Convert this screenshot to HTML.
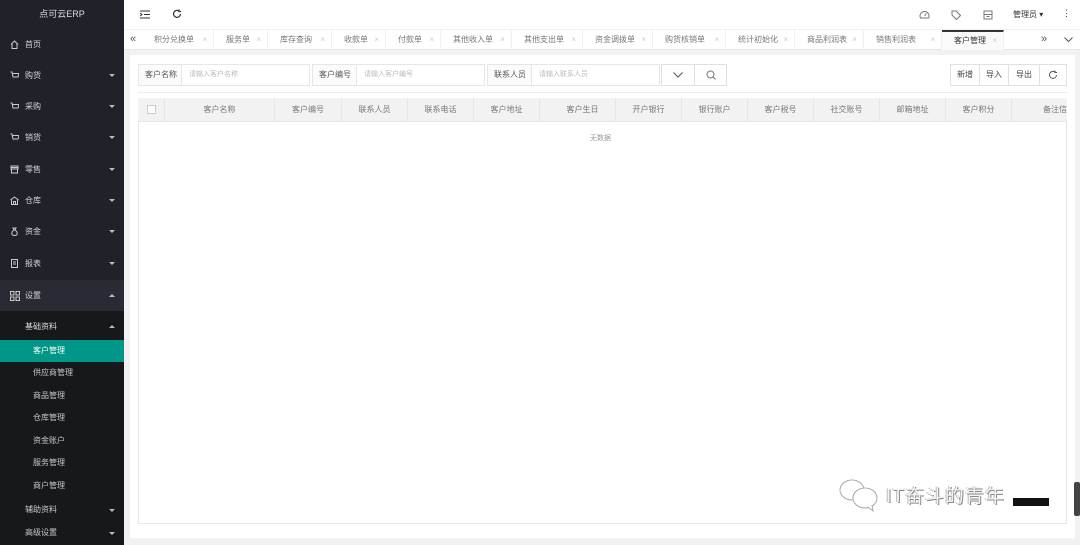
<!DOCTYPE html>
<html><head><meta charset="utf-8"><style>
*{margin:0;padding:0;box-sizing:border-box}
body{width:1080px;height:545px;overflow:hidden;font-family:"Liberation Sans","Noto Sans CJK SC",sans-serif;font-size:8px;color:#666;background:#f2f2f2;position:relative}
.side{position:absolute;left:0;top:0;width:124px;height:545px;background:#20222a;color:#ccc}
.logo{height:30px;line-height:28px;text-align:center;color:#ddd;font-size:9px}
.mi{position:absolute;left:0;width:124px;height:31px;line-height:31px;padding-left:10px;color:#d6d6d6;font-size:8px}
.mi svg{position:absolute;left:10px;top:11px}
.mi span.t{margin-left:15px}
.arr{position:absolute;right:9px;top:14px;width:0;height:0;border-left:3px solid transparent;border-right:3px solid transparent;border-top:3px solid #bbb}
.up{border-top:0;border-bottom:3px solid #bbb}
.sub{position:absolute;left:0;width:124px;height:22px;line-height:22px;padding-left:33px;color:#c8c8c8;font-size:8px}
.top{position:absolute;left:124px;top:0;right:0;height:30px;background:#fff;border-bottom:1px solid #f0f0f0}
.tabs{position:absolute;left:124px;top:30px;right:0;height:20px;background:#fff;border-bottom:1px solid #e6e6e6}
.tab{position:absolute;top:0;height:20px;line-height:20px;font-size:8px;color:#777;border-right:1px solid #f0f0f0;padding-left:12px}
.tab b{font-weight:normal;color:#ccc;position:absolute;right:6px}
.card{position:absolute;left:130px;top:55px;width:945px;height:483px;background:#fff}
.lbl{position:absolute;top:64px;height:22px;line-height:20px;border:1px solid #e6e6e6;font-size:8px;color:#555;background:#fbfbfb;padding-left:6px}
.inp{position:absolute;top:64px;height:22px;line-height:20px;border:1px solid #e6e6e6;font-size:7px;color:#bbb;padding-left:7px;background:#fff}
.btn{position:absolute;top:64px;height:22px;line-height:20px;border:1px solid #e0e0e0;text-align:center;font-size:8px;color:#444;background:#fff}
.th{position:absolute;top:98px;height:24px;line-height:24px;text-align:center;font-size:8px;color:#777;border-right:1px solid #e6e6e6}
</style></head><body>
<div class="side">
<div class="logo">点可云ERP</div>
<div class="mi" style="top:29px"><svg width="9" height="9" viewBox="0 0 9 9" fill="none" stroke="#ccc"><path d="M1 4.5L4.5 1 8 4.5M2 4v4.5h5V4"/></svg><span class="t">首页</span></div>
<div class="mi" style="top:60px"><svg width="9" height="9" viewBox="0 0 9 9" fill="none" stroke="#ccc"><path d="M0.5 1h1.5l1 5h5l1-3.5H2.5M3.5 8h.1M7 8h.1"/></svg><span class="t">购货</span><span class="arr"></span></div>
<div class="mi" style="top:91px"><svg width="9" height="9" viewBox="0 0 9 9" fill="none" stroke="#ccc"><path d="M0.5 1h1.5l1 5h5l1-3.5H2.5M3.5 8h.1M7 8h.1"/></svg><span class="t">采购</span><span class="arr"></span></div>
<div class="mi" style="top:122px"><svg width="9" height="9" viewBox="0 0 9 9" fill="none" stroke="#ccc"><path d="M0.5 1h1.5l1 5h5l1-3.5H2.5M3.5 8h.1M7 8h.1"/></svg><span class="t">销货</span><span class="arr"></span></div>
<div class="mi" style="top:154px"><svg width="9" height="9" viewBox="0 0 9 9" fill="none" stroke="#ccc"><path d="M1 1h7v3H1zM1.5 4v4h6V4M1 2.5h7"/></svg><span class="t">零售</span><span class="arr"></span></div>
<div class="mi" style="top:185px"><svg width="9" height="9" viewBox="0 0 9 9" fill="none" stroke="#ccc"><path d="M0.5 4L4.5 1 8.5 4M1.5 3.5v5h6v-5M3.5 8.5v-3h2v3"/></svg><span class="t">仓库</span><span class="arr"></span></div>
<div class="mi" style="top:216px"><svg width="9" height="9" viewBox="0 0 9 9" fill="none" stroke="#ccc"><path d="M3 1h3L5 3h-1zM4 3C1 5 1 8.5 4.5 8.5S8 5 5 3"/></svg><span class="t">资金</span><span class="arr"></span></div>
<div class="mi" style="top:248px"><svg width="9" height="9" viewBox="0 0 9 9" fill="none" stroke="#ccc"><path d="M1.5 0.5h6v8h-6zM3 3h3M3 5h3"/></svg><span class="t">报表</span><span class="arr"></span></div>
<div class="mi" style="top:280px;background:#282b33"><svg width="10" height="10" viewBox="0 0 10 10" fill="none" stroke="#ccc"><path d="M.5 .5h3.5v3.5H.5zM6 .5h3.5v3.5H6zM.5 6h3.5v3.5H.5zM6 6h3.5v3.5H6z"/></svg><span class="t">设置</span><span class="arr up"></span></div>
<div style="position:absolute;top:311px;left:0;width:124px;height:234px;background:#17181c"></div>
<div class="sub" style="top:314px;height:25px;line-height:25px;padding-left:25px;color:#ddd">基础资料<span class="arr up" style="top:11px"></span></div>
<div class="sub" style="top:340px;background:#009688;color:#fff">客户管理</div>
<div class="sub" style="top:362px">供应商管理</div>
<div class="sub" style="top:385px">商品管理</div>
<div class="sub" style="top:407px">仓库管理</div>
<div class="sub" style="top:430px">资金账户</div>
<div class="sub" style="top:452px">服务管理</div>
<div class="sub" style="top:475px">商户管理</div>
<div class="sub" style="top:499px;padding-left:25px">辅助资料<span class="arr" style="top:10px"></span></div>
<div class="sub" style="top:522px;padding-left:25px">高级设置<span class="arr" style="top:10px"></span></div>
</div>
<div class="top">
<svg style="position:absolute;left:16px;top:10px" width="10" height="9" viewBox="0 0 10 9" fill="none" stroke="#333"><path d="M0 1h10M4 4.5h6M0 8h10M0 3l2 1.5L0 6"/></svg>
<svg style="position:absolute;left:48px;top:9px" width="10" height="10" viewBox="0 0 10 10" fill="none" stroke="#333" stroke-width="1.2"><path d="M8.5 5A3.5 3.5 0 1 1 7 2M7 0.5V2.5H9"/></svg>
<svg style="position:absolute;left:795px;top:10px" width="11" height="10" viewBox="0 0 11 10" fill="none" stroke="#777"><path d="M1.5 8A4.5 4.5 0 1 1 9.5 8zM5.5 6l2-2.5"/></svg>
<svg style="position:absolute;left:827px;top:10px" width="10" height="10" viewBox="0 0 10 10" fill="none" stroke="#777"><path d="M1 1h4l4.5 4.5-4 4L1 5zM3 3h.1"/></svg>
<svg style="position:absolute;left:859px;top:10px" width="10" height="10" viewBox="0 0 10 10" fill="none" stroke="#777"><path d="M1 1h8v8H1zM1 4.5h8M3.5 6.5h3"/></svg>
<span style="position:absolute;left:889px;top:9px;font-size:8px;color:#333">管理员 ▾</span>
<span style="position:absolute;left:938px;top:8px;font-size:9px;color:#333">⋮</span>
</div>
<div class="tabs">
<span style="position:absolute;left:6px;top:3px;font-size:11px;color:#555">«</span>
<div class="tab" style="left:18px;width:72px">积分兑换单<b>×</b></div>
<div class="tab" style="left:90px;width:54px">服务单<b>×</b></div>
<div class="tab" style="left:144px;width:64px">库存查询<b>×</b></div>
<div class="tab" style="left:208px;width:54px">收款单<b>×</b></div>
<div class="tab" style="left:262px;width:55px">付款单<b>×</b></div>
<div class="tab" style="left:317px;width:71px">其他收入单<b>×</b></div>
<div class="tab" style="left:388px;width:71px">其他支出单<b>×</b></div>
<div class="tab" style="left:459px;width:70px">资金调拨单<b>×</b></div>
<div class="tab" style="left:529px;width:73px">购货核销单<b>×</b></div>
<div class="tab" style="left:602px;width:69px">统计初始化<b>×</b></div>
<div class="tab" style="left:671px;width:69px">商品利润表<b>×</b></div>
<div class="tab" style="left:740px;width:78px">销售利润表<b>×</b></div>
<div class="tab" style="left:818px;width:62px;color:#333;border-top:2px solid #333;line-height:17px;background:#fafafa">客户管理<b>×</b></div>
<span style="position:absolute;left:917px;top:3px;font-size:11px;color:#555">»</span>
<svg style="position:absolute;left:940px;top:7px" width="9" height="6" viewBox="0 0 9 6" fill="none" stroke="#555"><path d="M.5 .5l4 4 4-4"/></svg>
</div>
<div class="card"></div>
<div class="lbl" style="left:138px;width:44px">客户名称</div>
<div class="inp" style="left:181px;width:129px">请输入客户名称</div>
<div class="lbl" style="left:312px;width:45px">客户编号</div>
<div class="inp" style="left:356px;width:129px">请输入客户编号</div>
<div class="lbl" style="left:487px;width:45px">联系人员</div>
<div class="inp" style="left:531px;width:129px">请输入联系人员</div>
<div class="btn" style="left:661px;width:34px"><svg style="margin-top:7px" width="10" height="6" viewBox="0 0 10 6" fill="none" stroke="#555"><path d="M.5 .5l4.5 4.5 4.5-4.5"/></svg></div>
<div class="btn" style="left:694px;width:33px"><svg style="margin-top:5px" width="10" height="10" viewBox="0 0 10 10" fill="none" stroke="#777"><circle cx="4.5" cy="4.5" r="3.5"/><path d="M7 7l2.5 2.5"/></svg></div>
<div class="btn" style="left:950px;width:30px">新增</div>
<div class="btn" style="left:979px;width:30px">导入</div>
<div class="btn" style="left:1008px;width:32px">导出</div>
<div class="btn" style="left:1039px;width:28px"><svg style="margin-top:5px" width="10" height="10" viewBox="0 0 10 10" fill="none" stroke="#555"><path d="M8.5 5A3.5 3.5 0 1 1 7 2M7 0.5V2.5H9"/></svg></div>
<div style="position:absolute;left:138px;top:92px;width:929px;height:1px;background:#eee"></div>
<div style="position:absolute;left:138px;top:98px;width:929px;height:426px;border:1px solid #e6e6e6"></div>
<div style="position:absolute;left:138px;top:98px;width:929px;height:24px;background:#f2f2f2;border-bottom:1px solid #e6e6e6"></div>
<div class="th" style="left:138px;width:27px"><span style="display:inline-block;width:9px;height:9px;border:1px solid #ccc;background:#fff;margin-top:7px;vertical-align:top"></span></div>
<div class="th" style="left:165px;width:110px">客户名称</div>
<div class="th" style="left:275px;width:67px">客户编号</div>
<div class="th" style="left:342px;width:66px">联系人员</div>
<div class="th" style="left:408px;width:66px">联系电话</div>
<div class="th" style="left:474px;width:66px">客户地址</div>
<div class="th" style="left:540px;width:76px;padding-left:10px">客户生日</div>
<div class="th" style="left:616px;width:66px">开户银行</div>
<div class="th" style="left:682px;width:66px">银行账户</div>
<div class="th" style="left:748px;width:66px">客户税号</div>
<div class="th" style="left:814px;width:66px">社交账号</div>
<div class="th" style="left:880px;width:66px">邮箱地址</div>
<div class="th" style="left:946px;width:66px">客户积分</div>
<div class="th" style="left:1012px;width:55px;border:0;text-align:right;overflow:hidden;white-space:nowrap">备注信</div>
<div style="position:absolute;left:590px;top:133px;font-size:7px;color:#999">无数据</div>
<svg style="position:absolute;left:838px;top:478px" width="44" height="34" viewBox="0 0 44 34" fill="#fff" stroke="#aaa"><ellipse cx="14" cy="12" rx="12" ry="10"/><ellipse cx="27" cy="20" rx="12" ry="10"/><path d="M30 29l5 4-1-6"/></svg>
<div style="position:absolute;left:886px;top:481px;font-size:19px;color:#f4f4f4;text-shadow:1px 1px 0 #888,-1px 0 0 #bbb;letter-spacing:1px">IT奋斗的青年</div>
<div style="position:absolute;left:1013px;top:498px;width:36px;height:8px;background:#111"></div>
<div style="position:absolute;left:1074px;top:482px;width:6px;height:34px;background:#444;border-radius:2px"></div>
</body></html>
